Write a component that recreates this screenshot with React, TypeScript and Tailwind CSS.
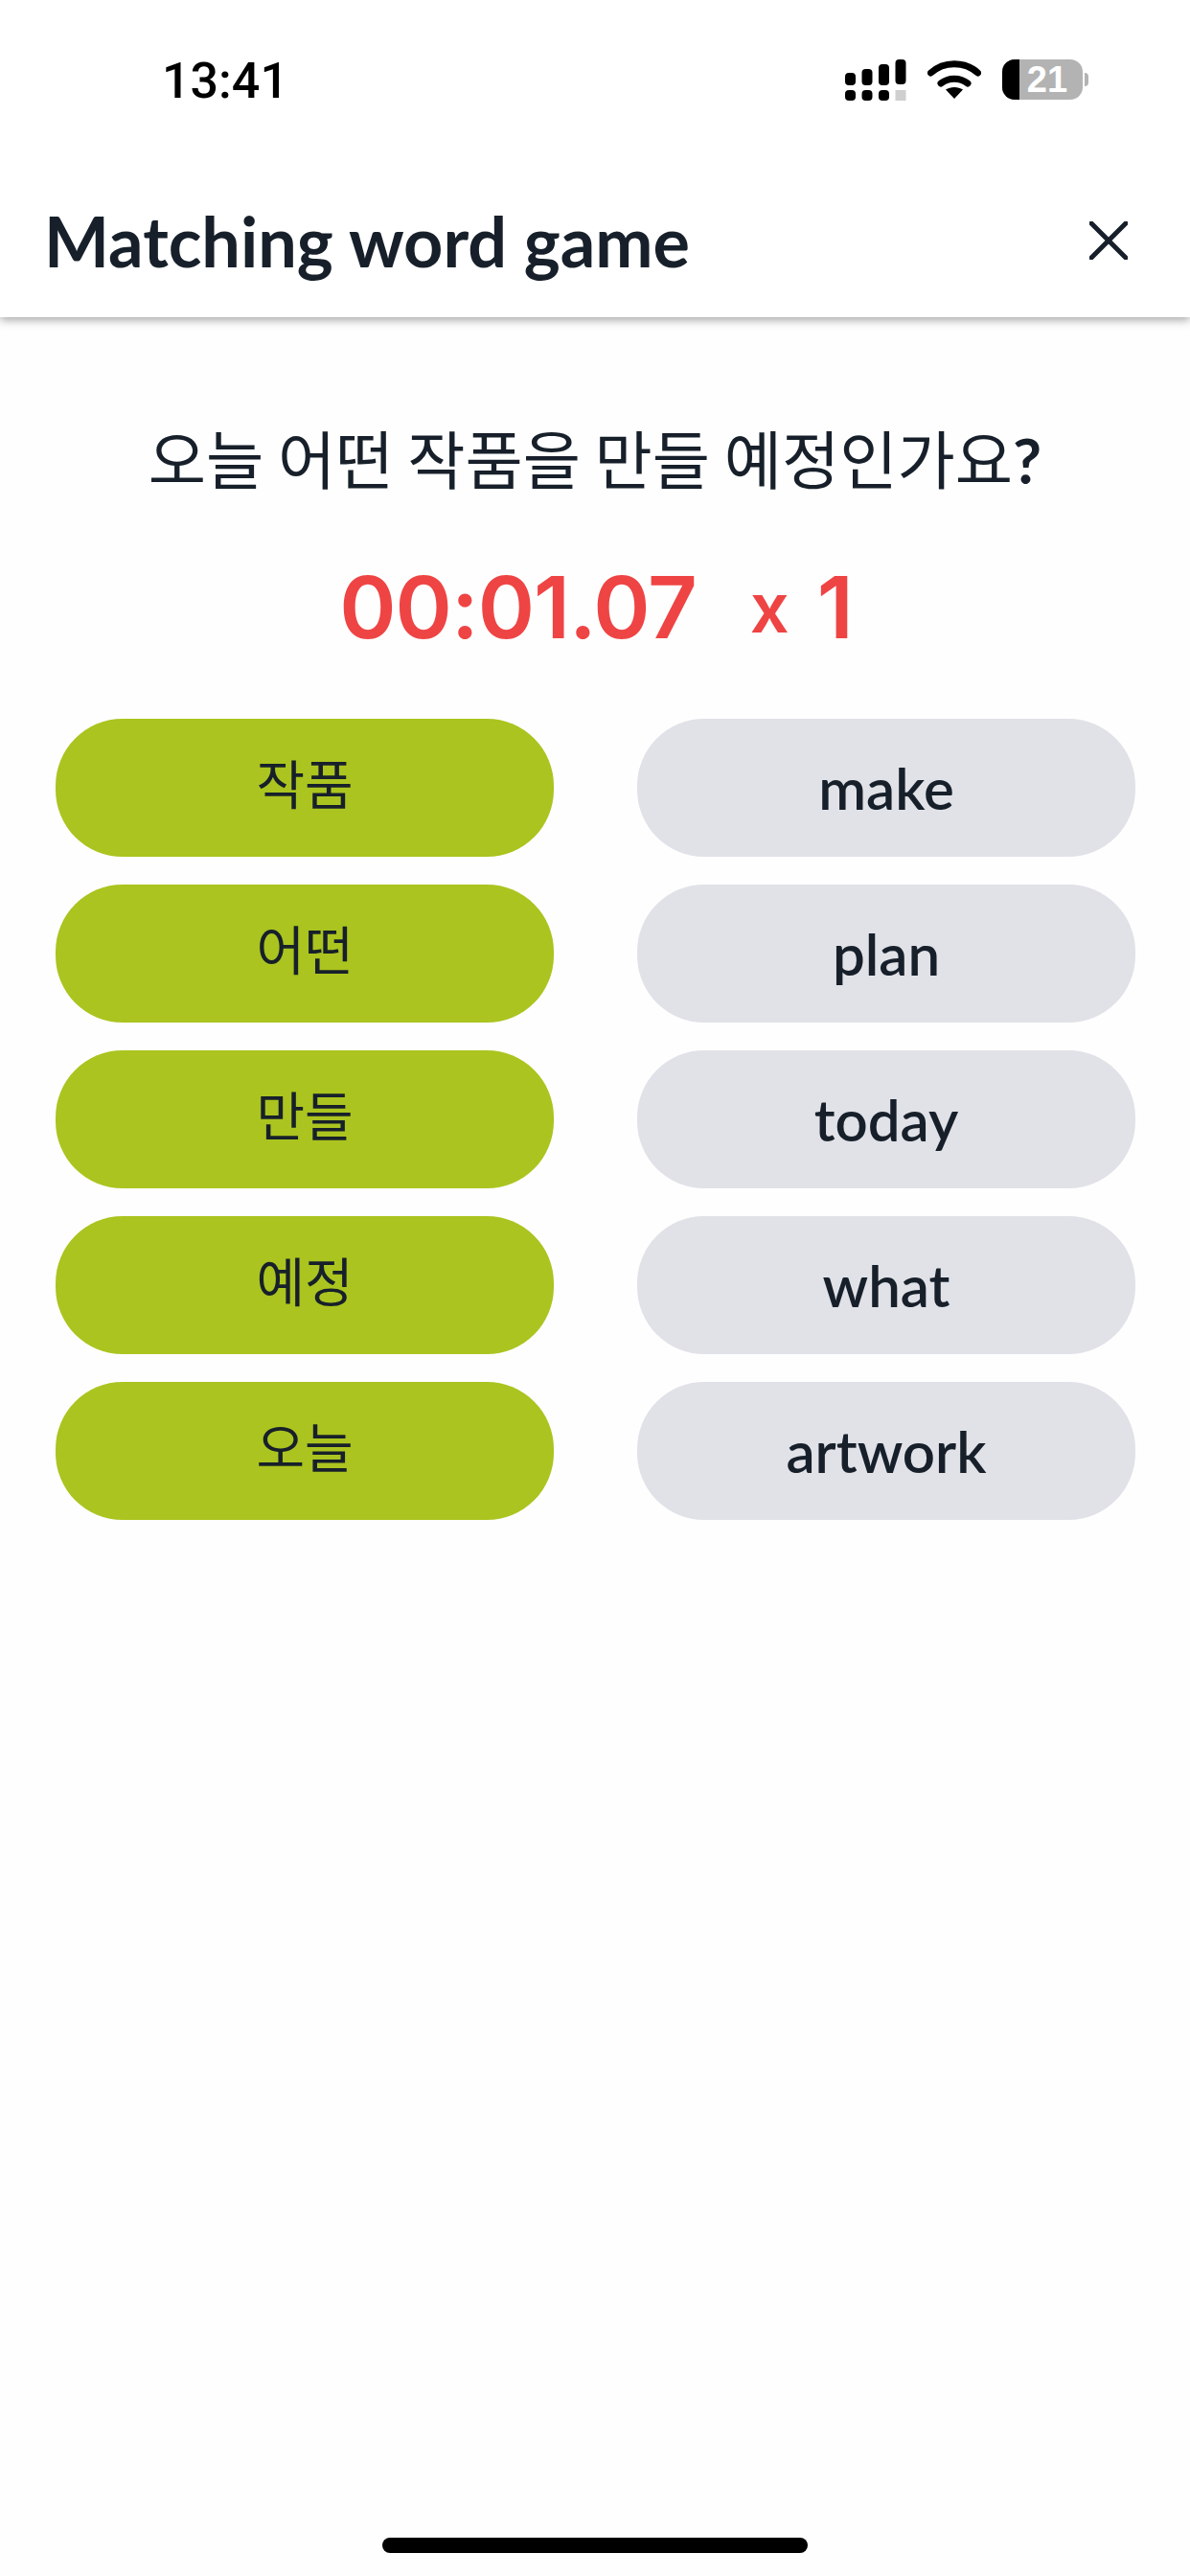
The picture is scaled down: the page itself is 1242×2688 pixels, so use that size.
const LEFT_WORDS = ["작품", "어떤", "만들", "예정", "오늘"]
const RIGHT_WORDS = ["make", "plan", "today", "what", "artwork"]

function SignalIcon() {
    return (
        <svg width="64" height="44" viewBox="0 0 64 44" className="block">
            <rect x="0" y="14" width="11" height="13" rx="4" fill="#000" />
            <rect x="17.5" y="10" width="11" height="17" rx="4" fill="#000" />
            <rect x="35" y="5" width="11" height="22" rx="4" fill="#000" />
            <rect x="52.5" y="0" width="11" height="26" rx="4" fill="#000" />
            <rect x="0" y="32" width="11" height="11" rx="4" fill="#000" />
            <rect x="17.5" y="32" width="11" height="11" rx="4" fill="#000" />
            <rect x="35" y="32" width="11" height="11" rx="4" fill="#000" />
            <rect x="52.5" y="32" width="11" height="11" fill="#cfcfcf" />
        </svg>
    )
}

function WifiIcon() {
    return (
        <svg width="56" height="42" viewBox="0 0 56 42" className="block">
            <path d="M3.5 14 C 17 1.5, 39 1.5, 52.5 14" fill="none" stroke="#000" strokeWidth="7" strokeLinecap="round" />
            <path d="M14 25 C 22 18.5, 34 18.5, 42 25" fill="none" stroke="#000" strokeWidth="7" strokeLinecap="round" />
            <path d="M19 31.5 C 24 28, 32 28, 37 31.5 L 28 41 Z" fill="#000" />
        </svg>
    )
}

function BatteryIcon() {
    return (
        <div className="flex items-center gap-[2px]">
            <div className="flex h-[42px] w-[84px] overflow-hidden rounded-[13px] bg-[#b3b3b3]">
                <div className="h-full w-[18px] bg-black" />
                <span className="flex-1 pr-[8px] text-center text-[38px] leading-[42px] font-bold text-white font-['Liberation_Sans',sans-serif]">21</span>
            </div>
            <div className="h-[14px] w-[4px] rounded-r-full bg-[#b3b3b3]" />
        </div>
    )
}

function Pill({ children, tone }: { children: string; tone: "green" | "gray" }) {
    if (tone === "green") {
        return (
            <div className="flex h-[144px] w-[520px] items-start justify-center rounded-[70px] bg-[#abc41f] pt-[30px] text-[55px] leading-[70px] text-[#17202a] font-['Noto_Sans_CJK_KR',sans-serif] font-normal">
                {children}
            </div>
        )
    }
    return (
        <div className="flex h-[144px] w-[520px] items-start justify-center rounded-[70px] bg-[#e1e2e8] pt-[36px] text-[60px] leading-[72px] font-semibold text-[#17202a] font-['Lato',sans-serif]">
            {children}
        </div>
    )
}

export default function App() {
    return (
        <div className="flex h-[2688px] w-[1242px] flex-col overflow-hidden bg-[#fefefe] font-['Lato',sans-serif]">
            <header className="h-[331px] bg-white shadow-[0_3px_9px_rgba(0,0,0,0.35)]">
                <div className="flex h-[168px] items-start justify-between pt-[60px] pr-[106px] pl-[169px]">
                    <span className="text-[52px] leading-[50px] font-medium text-black font-['Roboto',sans-serif]">13:41</span>
                    <div className="flex items-start gap-[22px] pt-[2px]">
                        <SignalIcon />
                        <WifiIcon />
                        <BatteryIcon />
                    </div>
                </div>
                <div className="flex items-center justify-between pr-[65px] pl-[46px] pt-[38px]">
                    <h1 className="text-[72px] leading-[90px] font-bold text-[#17202a] font-['Lato',sans-serif]">Matching word game</h1>
                    <svg width="40" height="40" viewBox="0 0 40 40" className="block">
                        <path d="M2 2 L38 38 M38 2 L2 38" stroke="#17202a" strokeWidth="5" strokeLinecap="round" />
                    </svg>
                </div>
            </header>

            <p className="mt-[104px] text-center text-[65.5px] leading-[84px] font-normal text-[#17202a] font-['Noto_Sans_CJK_KR',sans-serif]">
                오늘 어떤 작품을 만들 예정인가요<b className="font-bold font-['Lato',sans-serif]">?</b>
            </p>

            <div className="mt-[58px] flex items-center justify-center gap-[56px] pl-[2px] text-[90px] leading-[108px] font-semibold tracking-[-1px] text-[#ef4444] font-['Inter',sans-serif]">
                <span>00:01.07</span>
                <span className="flex items-center gap-[30px]">
                    <span className="text-[72px]">x</span>
                    <span>1</span>
                </span>
            </div>

            <div className="mt-[62px] flex justify-between pr-[57px] pl-[58px]">
                <div className="flex flex-col gap-[29px]">
                    {LEFT_WORDS.map((word) => (
                        <Pill key={word} tone="green">{word}</Pill>
                    ))}
                </div>
                <div className="flex flex-col gap-[29px]">
                    {RIGHT_WORDS.map((word) => (
                        <Pill key={word} tone="gray">{word}</Pill>
                    ))}
                </div>
            </div>

            <div className="mt-auto mb-[24px] h-[16px] w-[444px] self-center rounded-full bg-black" />
        </div>
    )
}
